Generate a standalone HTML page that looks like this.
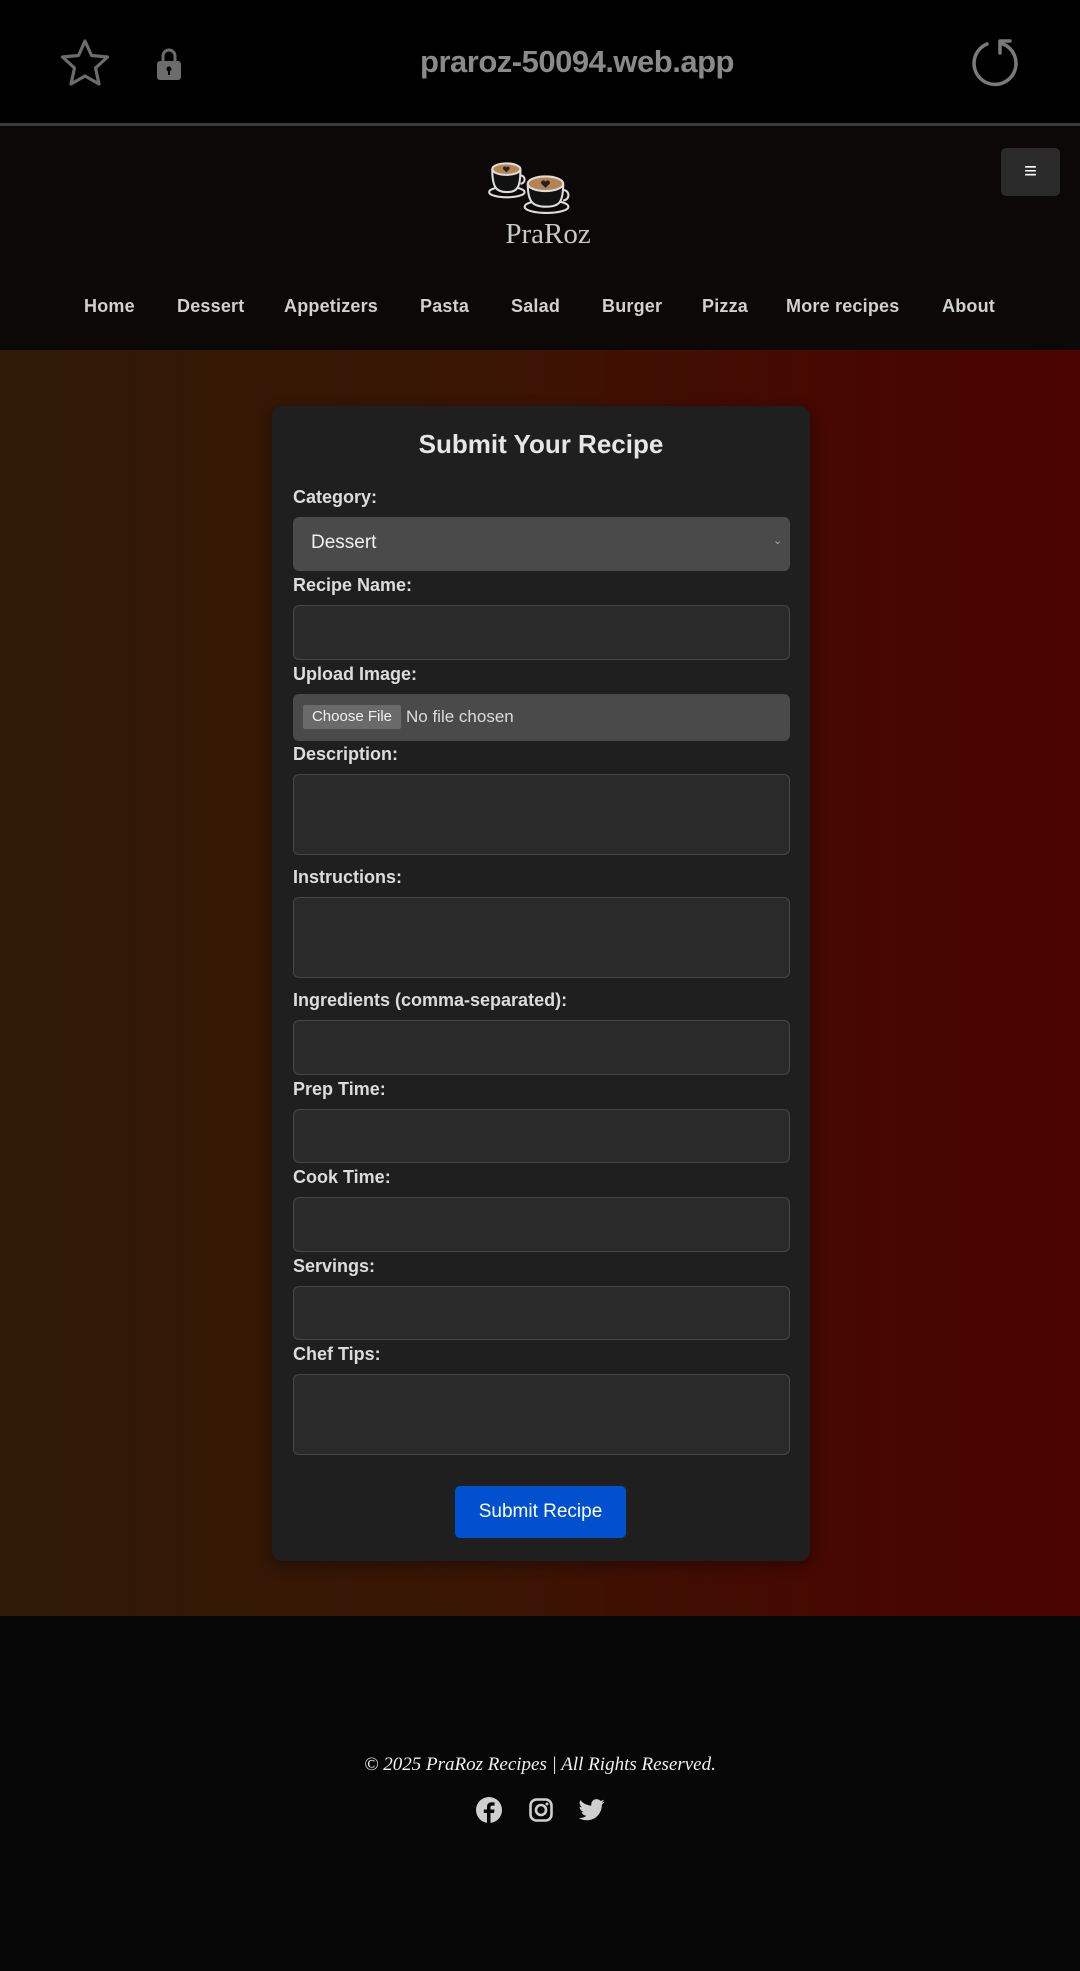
<!DOCTYPE html>
<html><head><meta charset="utf-8">
<style>
*{margin:0;padding:0;box-sizing:border-box}
body{width:1080px;height:1971px;background:#070707;position:relative;overflow:hidden;font-family:"Liberation Sans",sans-serif}
.abs{position:absolute}
#top{left:0;top:0;width:1080px;height:123px;background:#000}
#line{left:0;top:123px;width:1080px;height:3px;background:#3a3a3a}
#hdr{left:0;top:126px;width:1080px;height:224px;background:#0c0807}
.nav{top:296px;font-weight:bold;font-size:18px;color:#d0d0d0;white-space:nowrap;letter-spacing:0.2px}
#main{left:0;top:350px;width:1080px;height:1266px;background:linear-gradient(90deg,#2e1a05 0%,#3a1504 45%,#470700 80%,#4b0400 100%)}
#card{left:272px;top:406px;width:538px;height:1155px;background:#1f1f1f;border-radius:10px;box-shadow:0 4px 14px rgba(0,0,0,.4)}
.lbl{left:293px;font-weight:bold;font-size:18px;color:#dcdcdc;line-height:22px}
.in{left:293px;width:497px;background:#2a2a2a;border:1px solid #464646;border-radius:6px}
.gray{background:#4a4a4a;border:none}
</style></head><body>
<div id="top" class="abs"></div>
<div id="line" class="abs"></div>
<svg class="abs" style="left:58px;top:38px" width="54" height="52" viewBox="0 0 54 52"><path d="M27 3 L33.5 17.5 L49.5 19 L37.5 30 L41 46 L27 38 L13 46 L16.5 30 L4.5 19 L20.5 17.5 Z" fill="none" stroke="#6c6c6c" stroke-width="3.2" stroke-linejoin="round"/></svg>
<svg class="abs" style="left:156px;top:47px" width="26" height="34" viewBox="0 0 26 34"><path d="M7 15 V9 a6 6 0 0 1 12 0 V15" fill="none" stroke="#6c6c6c" stroke-width="3"/><rect x="1" y="14" width="24" height="19" rx="3" fill="#6c6c6c"/><circle cx="13" cy="22" r="2.5" fill="#000"/><rect x="12" y="22" width="2" height="6" fill="#000"/></svg>
<div class="abs" style="left:377px;top:44px;width:400px;text-align:center;font-weight:bold;font-size:31px;color:#8a8a8a;letter-spacing:-0.5px">praroz-50094.web.app</div>
<svg class="abs" style="left:970px;top:36px" width="52" height="54" viewBox="0 0 52 54"><path d="M30 7 A21 21 0 1 1 17 8" fill="none" stroke="#7a7a7a" stroke-width="3.5" stroke-linecap="round"/><path d="M30 17 V5 H40" fill="none" stroke="#7a7a7a" stroke-width="3.5" stroke-linecap="round" stroke-linejoin="round"/></svg>
<div id="hdr" class="abs"></div>
<svg class="abs" style="left:486px;top:160px" width="96" height="60" viewBox="0 0 92 56"><ellipse cx="20" cy="30" rx="17" ry="5" fill="none" stroke="#ddd" stroke-width="2"/><path d="M6 8 C6 26 10 30 20 30 C30 30 33 26 33 8" fill="#111" stroke="#ddd" stroke-width="2"/><ellipse cx="19.5" cy="8" rx="13.5" ry="5.5" fill="#b58452" stroke="#ddd" stroke-width="2"/><path d="M19.5 11 l-3 -3 a1.6 1.6 0 0 1 3 -1.5 a1.6 1.6 0 0 1 3 1.5z" fill="#222"/><path d="M33 14 a4 4 0 0 1 0 8" fill="none" stroke="#ddd" stroke-width="2"/><ellipse cx="58" cy="44" rx="21" ry="6" fill="#0c0807" stroke="#ddd" stroke-width="2"/><path d="M40 22 C40 40 45 44 58 44 C70 44 74 40 74 22" fill="#111" stroke="#ddd" stroke-width="2"/><ellipse cx="57" cy="22" rx="17" ry="7" fill="#b58452" stroke="#ddd" stroke-width="2"/><path d="M57 26 l-4 -4 a2 2 0 0 1 4 -2 a2 2 0 0 1 4 2z" fill="#222"/><path d="M74 28 a5 5 0 0 1 0 10" fill="none" stroke="#ddd" stroke-width="2"/></svg>
<div class="abs" style="left:498px;top:218px;width:100px;text-align:center;font-family:'Liberation Serif',serif;font-size:29px;color:#c8c8c8">PraRoz</div>
<div class="abs" style="left:1001px;top:148px;width:59px;height:48px;background:#2a2a2a;border-radius:5px;color:#fff;font-size:22px;text-align:center;line-height:46px">&#8801;</div>
<div class="abs nav" style="left:84px">Home</div>
<div class="abs nav" style="left:177px">Dessert</div>
<div class="abs nav" style="left:284px">Appetizers</div>
<div class="abs nav" style="left:420px">Pasta</div>
<div class="abs nav" style="left:511px">Salad</div>
<div class="abs nav" style="left:602px">Burger</div>
<div class="abs nav" style="left:702px">Pizza</div>
<div class="abs nav" style="left:786px">More recipes</div>
<div class="abs nav" style="left:942px">About</div>
<div id="main" class="abs"></div>
<div id="card" class="abs"></div>
<div class="abs" style="left:272px;top:429px;width:538px;text-align:center;font-weight:bold;font-size:26px;color:#e6e6e6">Submit Your Recipe</div>
<div class="abs lbl" style="top:486px">Category:</div>
<div class="abs in gray" style="top:517px;height:54px"></div>
<div class="abs" style="left:311px;top:532px;font-size:19px;color:#f0f0f0">Dessert</div>
<div class="abs" style="left:773px;top:534px;font-size:11px;color:#aaa">&#8964;</div>
<div class="abs lbl" style="top:574px">Recipe Name:</div>
<div class="abs in" style="top:605px;height:55px"></div>
<div class="abs lbl" style="top:663px">Upload Image:</div>
<div class="abs in gray" style="top:694px;height:47px"></div>
<div class="abs" style="left:303px;top:705px;width:98px;height:24px;background:#6a6a6a;border-radius:2px;color:#f0f0f0;font-size:15px;line-height:24px;text-align:center">Choose File</div>
<div class="abs" style="left:406px;top:707px;font-size:17px;color:#dcdcdc">No file chosen</div>
<div class="abs lbl" style="top:743px">Description:</div>
<div class="abs in" style="top:774px;height:81px"></div>
<div class="abs lbl" style="top:866px">Instructions:</div>
<div class="abs in" style="top:897px;height:81px"></div>
<div class="abs lbl" style="top:989px">Ingredients (comma-separated):</div>
<div class="abs in" style="top:1020px;height:55px"></div>
<div class="abs lbl" style="top:1078px">Prep Time:</div>
<div class="abs in" style="top:1109px;height:54px"></div>
<div class="abs lbl" style="top:1166px">Cook Time:</div>
<div class="abs in" style="top:1197px;height:55px"></div>
<div class="abs lbl" style="top:1255px">Servings:</div>
<div class="abs in" style="top:1286px;height:54px"></div>
<div class="abs lbl" style="top:1343px">Chef Tips:</div>
<div class="abs in" style="top:1374px;height:81px"></div>
<div class="abs" style="left:455px;top:1486px;width:171px;height:52px;background:#0050d0;border-radius:5px;color:#fff;font-size:19px;text-align:center;line-height:52px">Submit Recipe</div>
<div class="abs" style="left:240px;top:1754px;width:600px;text-align:center;font-family:'Liberation Serif',serif;font-style:italic;font-size:19px;color:#f2f2f2">© 2025 PraRoz Recipes | All Rights Reserved.</div>
<svg class="abs" style="left:476px;top:1797px" width="26" height="26" viewBox="0 0 26 26"><circle cx="13" cy="13" r="13" fill="#cfcfcf"/><path d="M14.5 26 V16 H18 L18.5 12.5 H14.5 V10.3 C14.5 9.3 15 8.6 16.4 8.6 H18.6 V5.5 C18 5.4 16.8 5.3 15.6 5.3 C12.8 5.3 11 7 11 10 V12.5 H7.8 V16 H11 V26 Z" fill="#070707"/></svg>
<svg class="abs" style="left:529px;top:1798px" width="24" height="24" viewBox="0 0 24 24"><rect x="1.5" y="1.5" width="21" height="21" rx="6" fill="none" stroke="#cfcfcf" stroke-width="2.6"/><circle cx="12" cy="12" r="5" fill="none" stroke="#cfcfcf" stroke-width="2.6"/><circle cx="18" cy="6" r="1.5" fill="#cfcfcf"/></svg>
<svg class="abs" style="left:579px;top:1799px" width="26" height="22" viewBox="0 0 24 20"><path d="M23.6 2.3 c-.9.4-1.8.6-2.8.8 1-.6 1.8-1.5 2.1-2.7 -.9.6-2 1-3.1 1.2 C18.9.6 17.6 0 16.2 0 13.5 0 11.3 2.2 11.3 4.9 c0 .4 0 .8.1 1.1 C7.3 5.8 3.7 3.9 1.3.9 .9 1.7.6 2.5.6 3.4 c0 1.7.9 3.2 2.2 4.1 -.8 0-1.6-.2-2.2-.6 v.1 c0 2.4 1.7 4.4 3.9 4.8 -.4.1-.8.2-1.3.2 -.3 0-.6 0-.9-.1 .6 2 2.4 3.4 4.6 3.4 -1.7 1.3-3.8 2.1-6.1 2.1 -.4 0-.8 0-1.2-.1 2.2 1.4 4.8 2.2 7.5 2.2 9.1 0 14-7.5 14-14 v-.6 c1-.7 1.8-1.6 2.5-2.6z" fill="#cfcfcf"/></svg>
</body></html>
